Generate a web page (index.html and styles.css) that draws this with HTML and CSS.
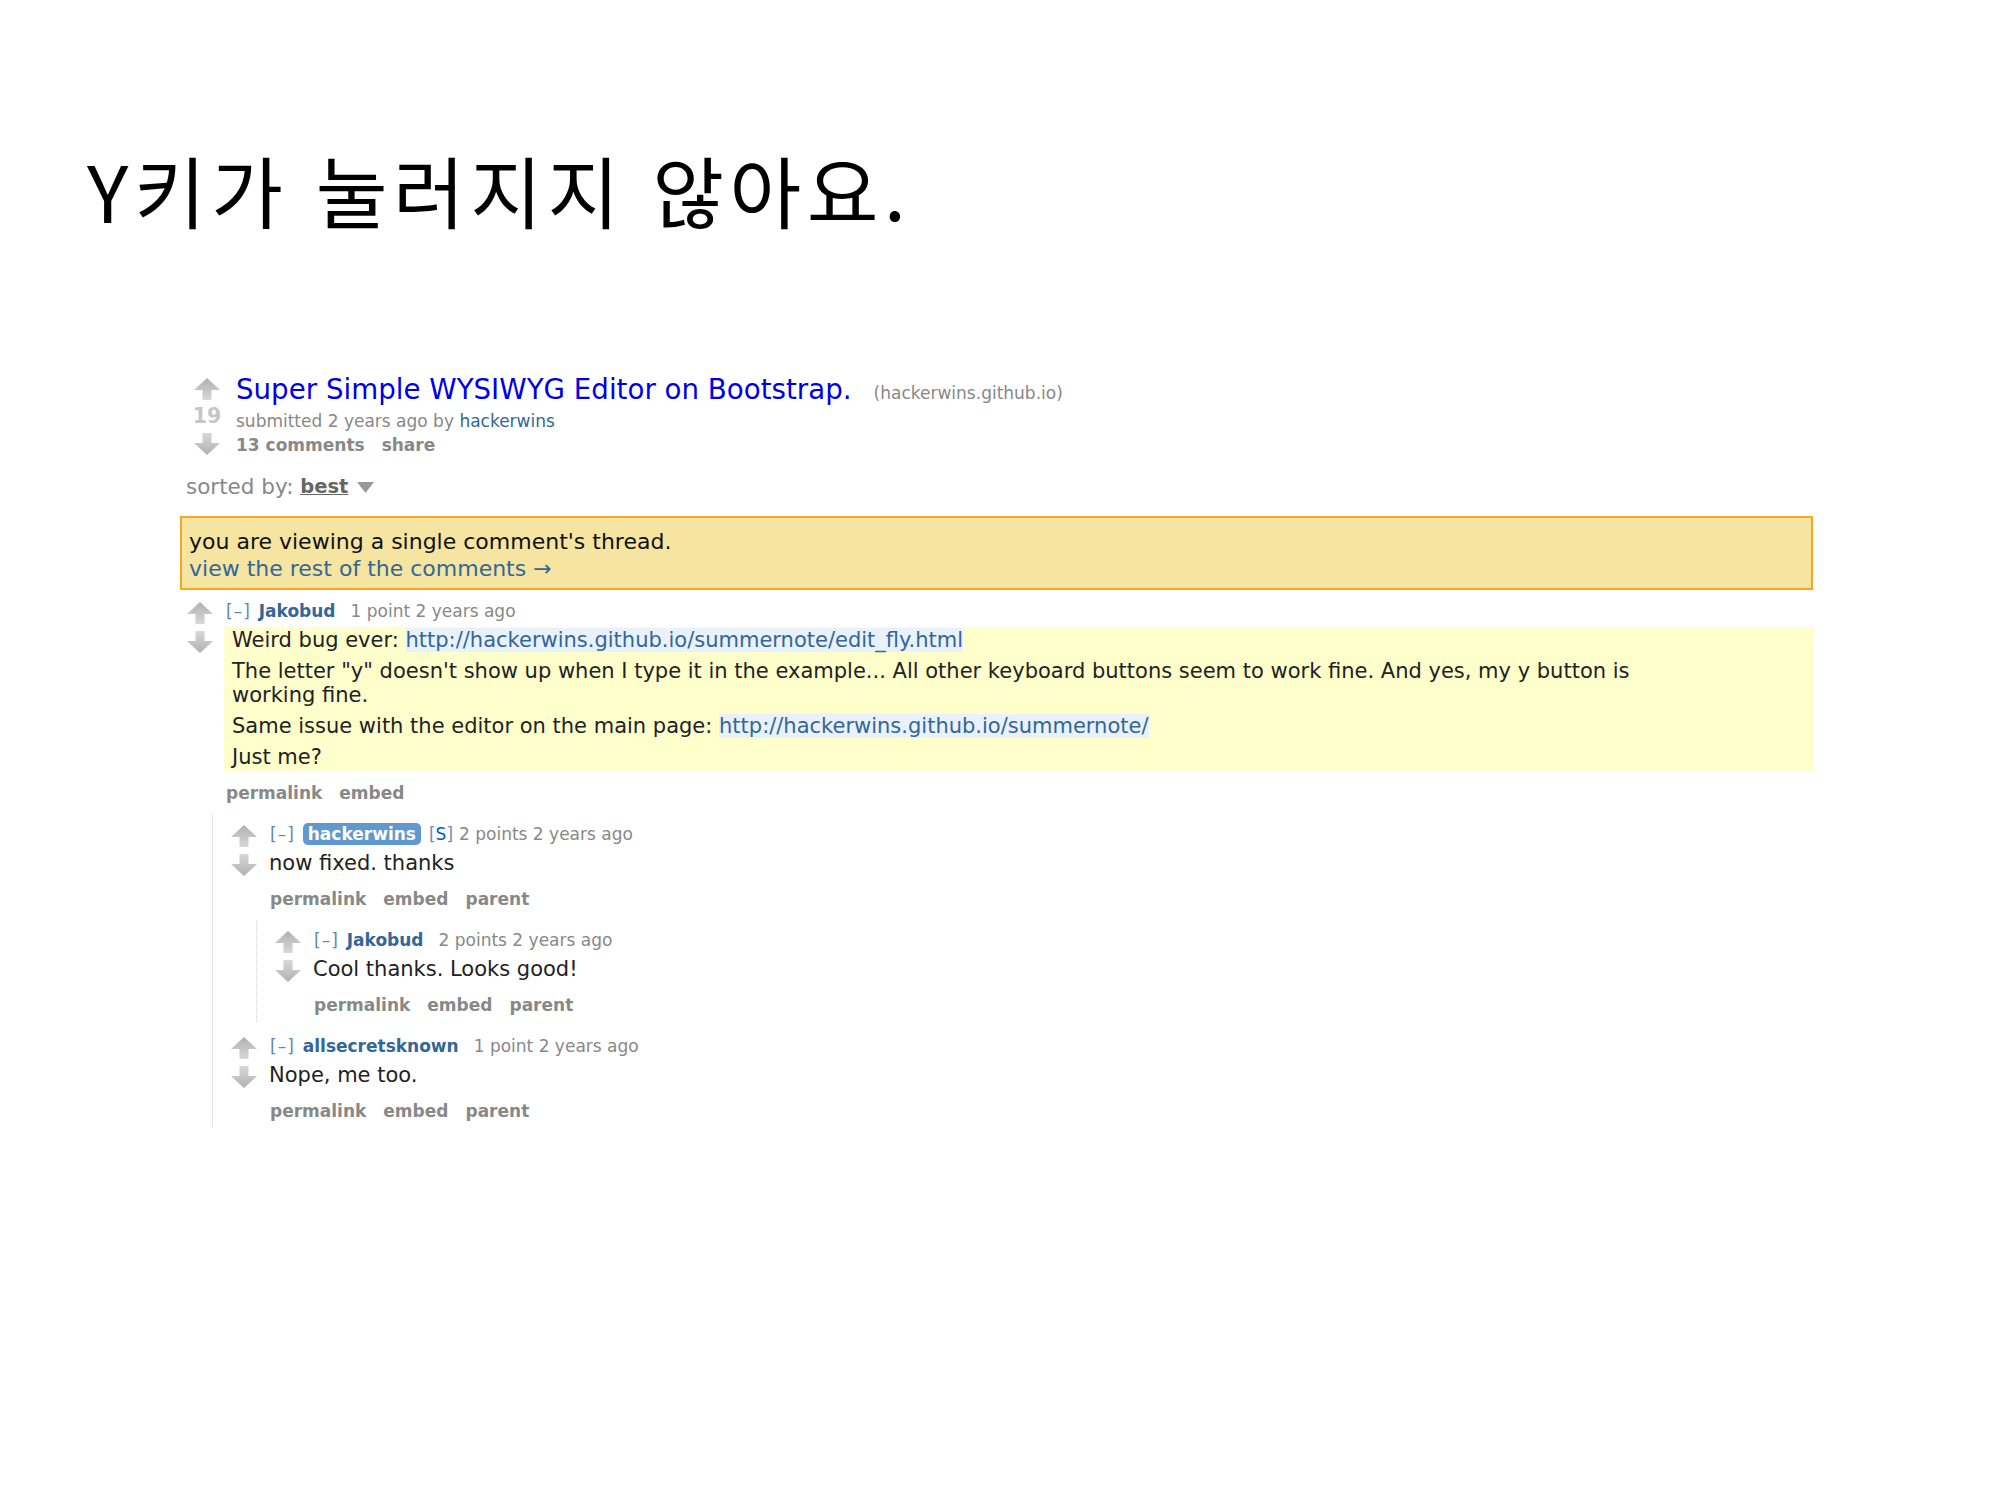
FILE: index.html
```html
<!DOCTYPE html>
<html lang="ko">
<head>
<meta charset="utf-8">
<title>Y키가 눌러지지 않아요.</title>
<link rel="stylesheet" href="styles.css">
</head>
<body>
<svg class="defs" width="0" height="0" aria-hidden="true">
  <defs>
    <linearGradient id="ag" x1="0" y1="0" x2="0" y2="1">
      <stop offset="0" stop-color="#b0b0b0"/>
      <stop offset="1" stop-color="#d8d8d8"/>
    </linearGradient>
    <linearGradient id="agd" x1="0" y1="0" x2="0" y2="1">
      <stop offset="0" stop-color="#d8d8d8"/>
      <stop offset="1" stop-color="#b0b0b0"/>
    </linearGradient>
    <symbol id="up" viewBox="0 0 26 22"><path d="M13 0 L26 12 L17.5 12 L17.5 22 L8.5 22 L8.5 12 L0 12 Z" fill="url(#ag)"/></symbol>
    <symbol id="down" viewBox="0 0 26 22"><path d="M8.5 0 H17.5 V10 H26 L13 22 L0 10 H8.5 Z" fill="url(#agd)"/></symbol>
  </defs>
</svg>
<main class="slide">
  <h1 class="slide-title">Y키가 눌러지지 않아요.</h1>
  <section class="thread">
    <div class="post">
      <div class="midcol">
        <svg class="arrow"><use href="#up"/></svg>
        <div class="score">19</div>
        <svg class="arrow"><use href="#down"/></svg>
      </div>
      <div class="post-entry">
        <p class="title-line"><a class="title">Super Simple WYSIWYG Editor on Bootstrap.</a><span class="domain">(hackerwins.github.io)</span></p>
        <p class="tagline">submitted 2 years ago by <a class="user">hackerwins</a></p>
        <ul class="buttons"><li>13 comments</li><li>share</li></ul>
      </div>
    </div>
    <div class="sort"><span class="sort-label">sorted by: </span><span class="sort-choice">best</span><svg class="caret" viewBox="0 0 17 11"><path d="M0 0 H17 L8.5 11 Z" fill="#999"/></svg></div>
    <div class="notice">you are viewing a single comment's thread.<br><a class="notice-link">view the rest of the comments →</a></div>

    <div class="comment top">
      <div class="comment-main">
        <div class="midcol">
          <svg class="arrow"><use href="#up"/></svg>
          <svg class="arrow"><use href="#down"/></svg>
        </div>
        <div class="entry">
          <p class="ctag"><span class="expand">[–]</span><a class="author">Jakobud</a><span class="score-c">1 point 2 years ago</span></p>
          <div class="md highlight">
            <p>Weird bug ever: <a class="mdlink">http://hackerwins.github.io/summernote/edit_fly.html</a></p>
            <p>The letter "y" doesn't show up when I type it in the example... All other keyboard buttons seem to work fine. And yes, my y button is working fine.</p>
            <p>Same issue with the editor on the main page: <a class="mdlink">http://hackerwins.github.io/summernote/</a></p>
            <p>Just me?</p>
          </div>
          <ul class="buttons cbuttons"><li>permalink</li><li>embed</li></ul>
        </div>
      </div>
      <div class="children">
        <div class="comment">
          <div class="comment-main">
            <div class="midcol">
              <svg class="arrow"><use href="#up"/></svg>
              <svg class="arrow"><use href="#down"/></svg>
            </div>
            <div class="entry">
              <p class="ctag"><span class="expand">[–]</span><a class="author submitter">hackerwins</a><span class="flair">[<span class="flair-s">S</span>]</span><span class="score-c">2 points 2 years ago</span></p>
              <div class="md"><p>now fixed. thanks</p></div>
              <ul class="buttons cbuttons"><li>permalink</li><li>embed</li><li>parent</li></ul>
            </div>
          </div>
          <div class="children">
            <div class="comment">
              <div class="comment-main">
                <div class="midcol">
                  <svg class="arrow"><use href="#up"/></svg>
                  <svg class="arrow"><use href="#down"/></svg>
                </div>
                <div class="entry">
                  <p class="ctag"><span class="expand">[–]</span><a class="author">Jakobud</a><span class="score-c">2 points 2 years ago</span></p>
                  <div class="md"><p>Cool thanks. Looks good!</p></div>
                  <ul class="buttons cbuttons"><li>permalink</li><li>embed</li><li>parent</li></ul>
                </div>
              </div>
            </div>
          </div>
        </div>
        <div class="comment">
          <div class="comment-main">
            <div class="midcol">
              <svg class="arrow"><use href="#up"/></svg>
              <svg class="arrow"><use href="#down"/></svg>
            </div>
            <div class="entry">
              <p class="ctag"><span class="expand">[–]</span><a class="author">allsecretsknown</a><span class="score-c">1 point 2 years ago</span></p>
              <div class="md"><p>Nope, me too.</p></div>
              <ul class="buttons cbuttons"><li>permalink</li><li>embed</li><li>parent</li></ul>
            </div>
          </div>
        </div>
      </div>
    </div>
  </section>
</main>
</body>
</html>
```
FILE: styles.css
```css
* { box-sizing: border-box; }
html, body { margin: 0; padding: 0; background: #fff; }
body { font-family: "DejaVu Sans", Verdana, sans-serif; color: #222; }

.defs { position: absolute; width: 0; height: 0; overflow: hidden; }

.slide { padding: 150px 0 0 87px; }
.slide-title {
  margin: 0;
  font-family: "Noto Sans CJK KR", "Noto Sans", sans-serif;
  font-weight: 400;
  font-size: 78px;
  line-height: 78px;
  letter-spacing: 5.5px;
  color: #000;
}

.thread { margin: 147px 0 0 93px; width: 1633px; }

p { margin: 0; }
a { text-decoration: none; }

/* post */
.post { display: flex; margin-left: 14px; }
.midcol { width: 26px; flex-shrink: 0; display: flex; flex-direction: column; align-items: center; }
.post .midcol { margin-top: 3px; }
.arrow { width: 26px; height: 22px; display: block; flex-shrink: 0; }
.score { font-weight: 700; font-size: 20.5px; line-height: 22px; height: 22px; color: #c6c6c6; margin: 5px 0 6px; }
.post-entry { margin-left: 16px; }
.title-line { line-height: 30px; white-space: nowrap; }
.title { font-size: 27.7px; color: #0000e6; }
.domain { font-size: 17px; color: #888; margin-left: 22px; }
.tagline { font-size: 17px; line-height: 24px; color: #888; }
.user { color: #369; }

.buttons { list-style: none; margin: 0; padding: 0; display: flex; gap: 17px; font-weight: 700; font-size: 17px; line-height: 24px; color: #888; }

.sort { margin: 17px 0 0 6px; line-height: 26px; color: #888; display: flex; align-items: center; white-space: pre; }
.sort-label { font-size: 21.5px; }
.sort-choice { font-weight: 700; color: #666; text-decoration: underline; font-size: 19.5px; }
.caret { width: 17px; height: 11px; margin-left: 9px; }

.notice {
  margin-top: 16px;
  border: 2px solid #f8a523;
  background: #f5e5a0;
  padding: 10px 7px 6px;
  font-size: 22px;
  line-height: 27px;
  color: #111;
}
.notice-link { color: #369; }

/* comments */
.comment { padding-top: 10px; }
.comment.top { padding-top: 11px; }
.comment + .comment { margin-top: 5px; }
.comment-main { display: flex; }
.comment .midcol { margin-left: 7px; margin-top: 1px; gap: 7px; }
.entry { flex: 1; min-width: 0; margin-left: 11px; }
.ctag { font-size: 17px; line-height: 20px; padding-left: 2px; color: #888; white-space: nowrap; }
.expand { color: #5f86b4; margin-right: 8px; letter-spacing: 1px; }
.author { color: #336699; font-weight: 700; margin-right: 15px; }
.author.submitter { background: #5f99cf; color: #fff; border-radius: 5px; padding: 1px 5px; margin-right: 8px; }
.flair { color: #6f8db3; margin-right: 6px; }
.flair-s { color: #0055df; }

.md { margin-top: 6px; padding: 1px 1px 2px; font-size: 21px; line-height: 24px; color: #222; }
.md.highlight { background: #ffffcc; padding: 1px 8px 2px; }
.md p { max-width: 1410px; }
.md p + p { margin-top: 7px; }
.mdlink { color: #336699; background: #e9f2fb; }

.cbuttons { margin-top: 11px; line-height: 22px; padding-left: 2px; }

.children { margin: 10px 0 0 32px; border-left: 1px dotted #cfd2da; padding: 0 0 5px 11px; }
```
